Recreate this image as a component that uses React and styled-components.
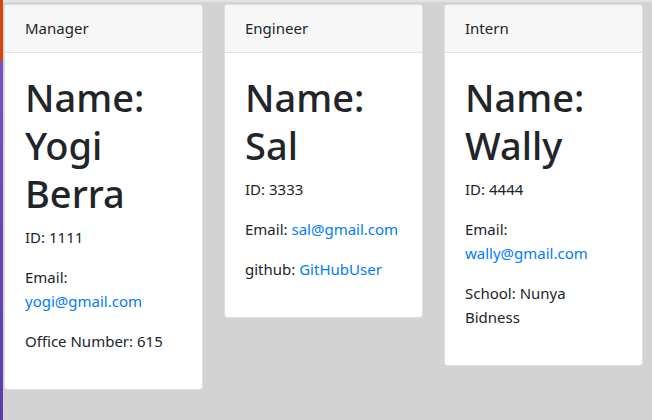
import React from 'react';
import styled, { createGlobalStyle } from 'styled-components';

const GlobalStyle = createGlobalStyle`
    html, body {
        margin: 0;
        padding: 0;
        background: #d3d3d3;
    }
    body {
        font-family: "Noto Sans", "Open Sans", sans-serif;
        font-size: 15px;
        line-height: 24px;
        color: #212529;
    }
`;

const Page = styled.div`
    display: flex;
    min-height: 420px;
`;

const Edge = styled.div`
    width: 3px;
    flex-shrink: 0;
    background: linear-gradient(to bottom, #d2480c 0, #d2480c 60px, #7a52c0 62px, #6a48b6 200px, #5a3fa6 420px);
`;

const Main = styled.main`
    flex: 1;
    display: flex;
    align-items: flex-start;
    gap: 21px;
    border-top: 2px solid #e3e3e3;
    padding: 2px 0 0 1px;
`;

const Card = styled.div`
    width: 199px;
    box-sizing: border-box;
    background: #fff;
    border: 1px solid rgba(0, 0, 0, 0.125);
    border-radius: 4px;
    overflow: hidden;
`;

const CardHeader = styled.div`
    padding: 11px 20px 12px;
    background: #f7f7f7;
    border-bottom: 1px solid #dfdfdf;
`;

const CardBody = styled.div`
    padding: 20px;
`;

const Title = styled.h1`
    margin: 0 0 8px;
    font-size: 38px;
    font-weight: 500;
    line-height: 48px;
`;

const Info = styled.p`
    margin: 0 0 16px;
`;

const Link = styled.a`
    color: #007bff;
    text-decoration: none;
`;

const team = [
    { role: 'Manager', name: 'Yogi Berra', id: 1111, email: 'yogi@gmail.com', extra: ['Office Number', '615'] },
    { role: 'Engineer', name: 'Sal', id: 3333, email: 'sal@gmail.com', extra: ['github', 'GitHubUser', true] },
    { role: 'Intern', name: 'Wally', id: 4444, email: 'wally@gmail.com', extra: ['School', 'Nunya Bidness'] },
];

export default function App() {
    return (
        <>
            <GlobalStyle />
            <Page>
                <Edge />
                <Main>
                    {team.map((m) => (
                        <Card key={m.id}>
                            <CardHeader>{m.role}</CardHeader>
                            <CardBody>
                                <Title>Name: {m.name}</Title>
                                <Info>ID: {m.id}</Info>
                                <Info>Email: <Link href="#">{m.email}</Link></Info>
                                <Info>
                                    {m.extra[0]}: {m.extra[2] ? <Link href="#">{m.extra[1]}</Link> : m.extra[1]}
                                </Info>
                            </CardBody>
                        </Card>
                    ))}
                </Main>
            </Page>
        </>
    );
}
